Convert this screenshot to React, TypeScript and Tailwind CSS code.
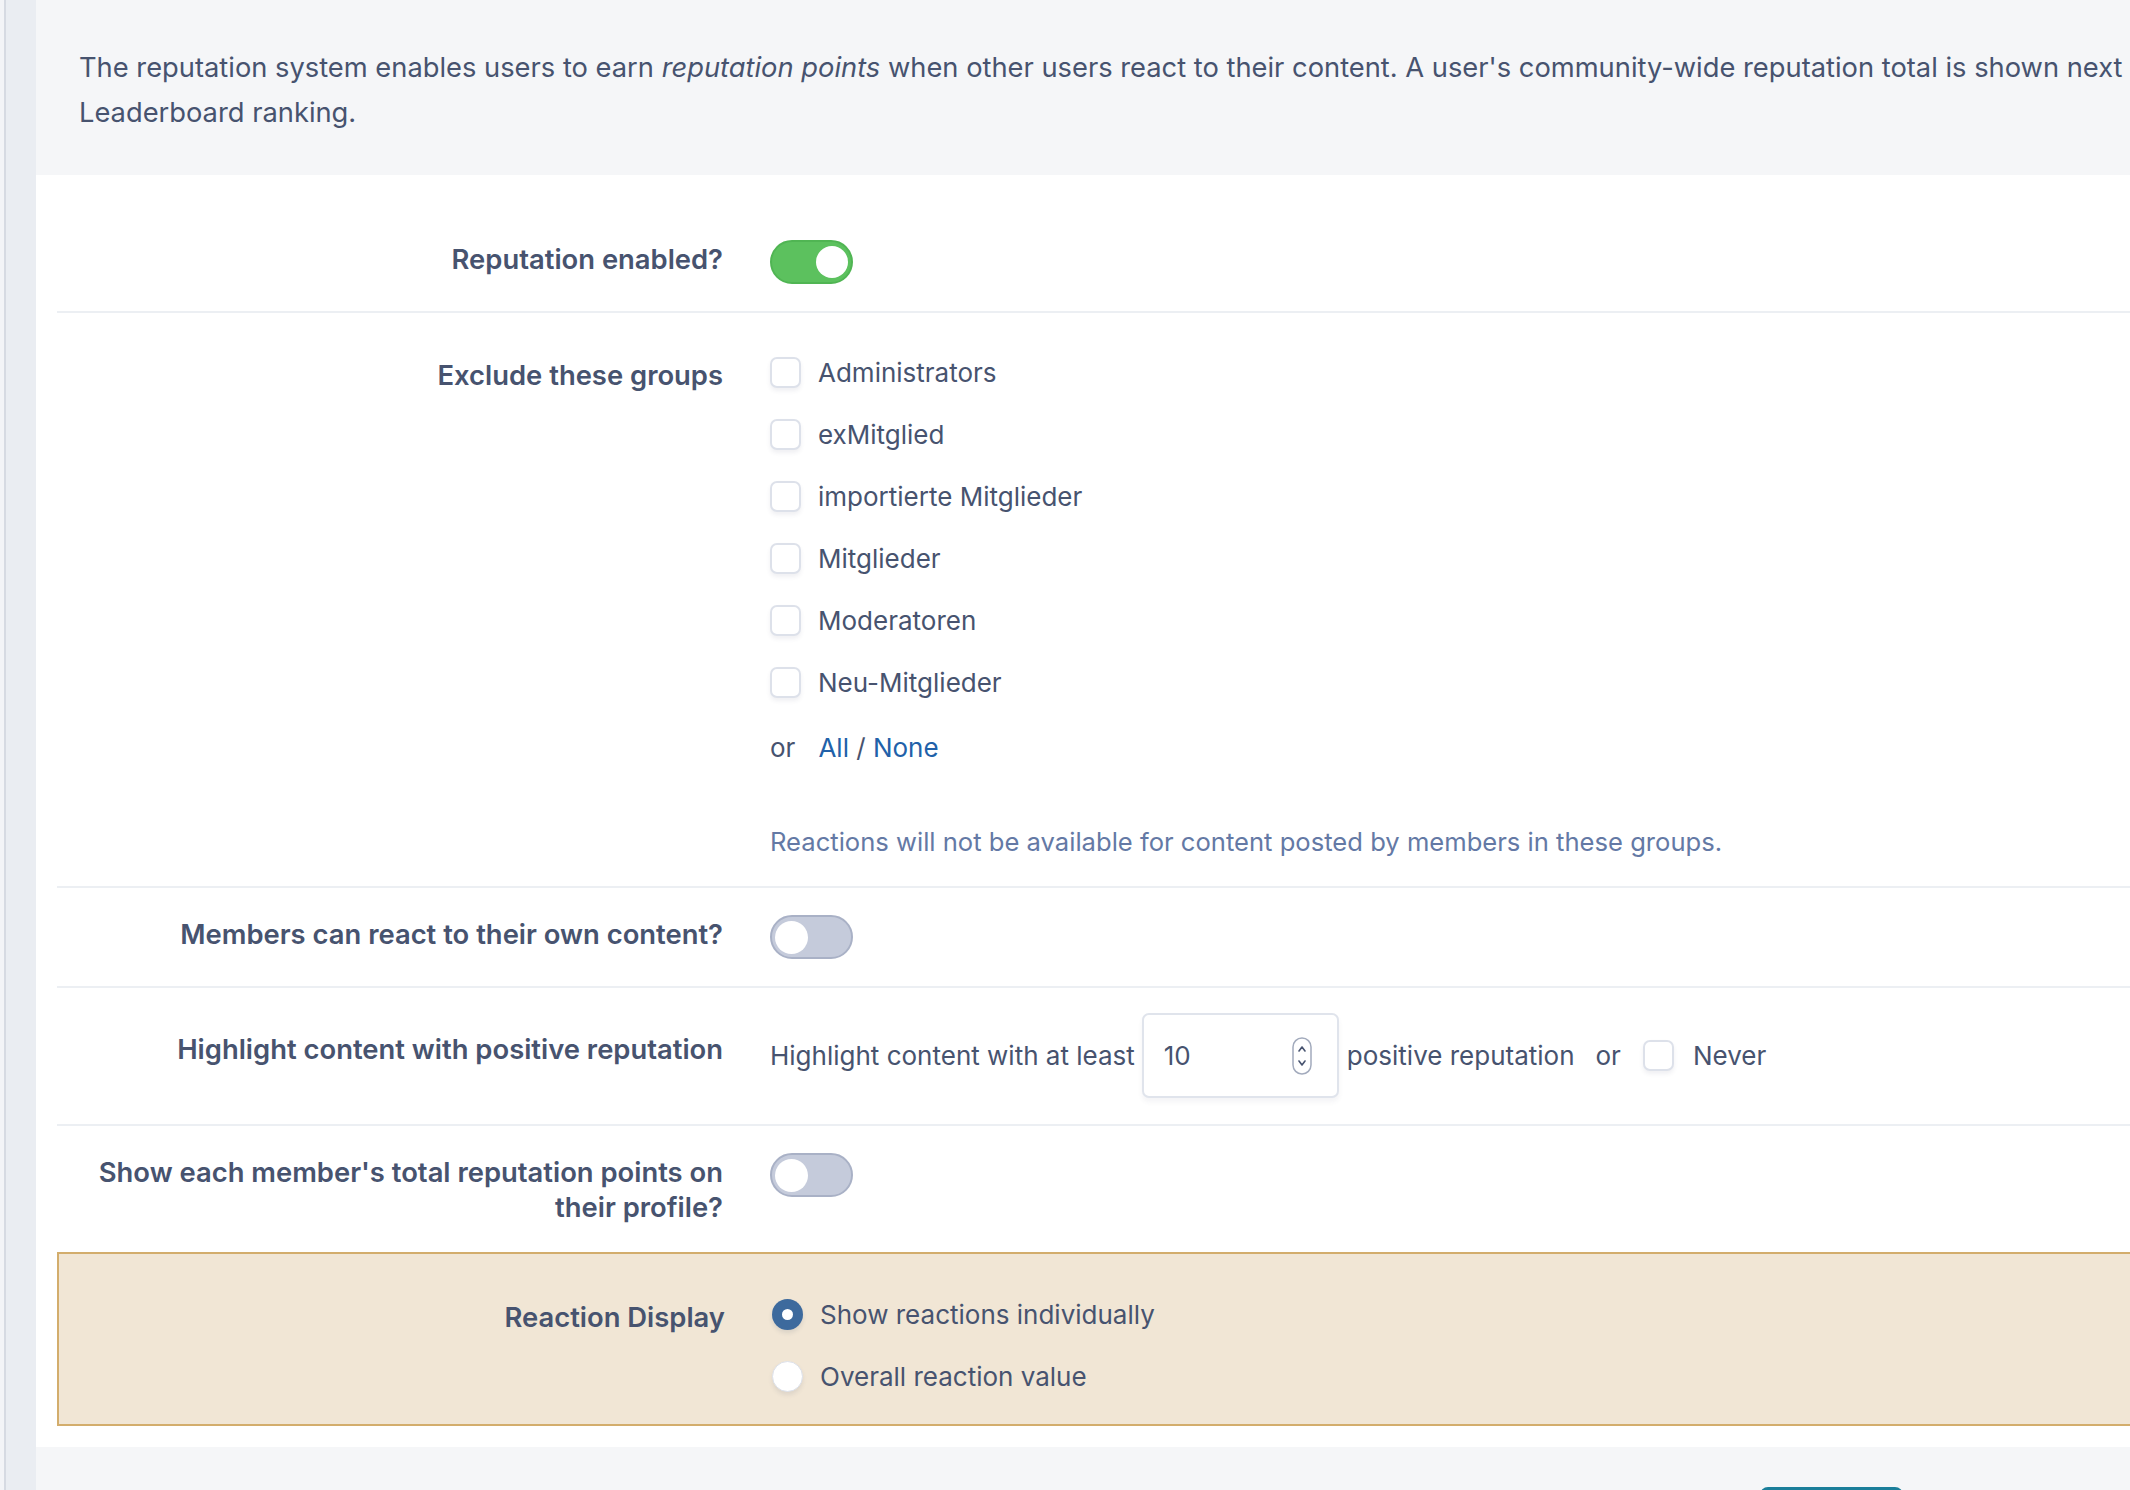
import React from "react";

function ToggleOn() {
  return (
    <div className="w-[83px] h-[44px] rounded-full bg-[#5cc15e] border-2 border-[#50b553] flex items-center justify-end pr-[3px]">
      <div className="w-[32px] h-[32px] rounded-full bg-white" />
    </div>
  );
}

function ToggleOff() {
  return (
    <div className="w-[83px] h-[44px] rounded-full bg-[#c5cbdb] border-2 border-[#a9b1c6] flex items-center pl-[3px]">
      <div className="w-[33px] h-[33px] rounded-full bg-white" />
    </div>
  );
}

function Checkbox() {
  return (
    <span className="block w-[31px] h-[31px] shrink-0 rounded-[7px] border-2 border-[#dde1ea] bg-white shadow-[0_3px_4px_rgba(60,70,100,0.08)]" />
  );
}

function Spinner() {
  return (
    <svg width="22" height="40" viewBox="0 0 22 40" fill="none">
      <rect x="2" y="2" width="18" height="36" rx="9" stroke="#a3abbd" strokeWidth="1.5" fill="white" />
      <path d="M8 15 L11 11 L14 15" stroke="#47536f" strokeWidth="1.6" strokeLinecap="round" strokeLinejoin="round" />
      <path d="M8 25 L11 29 L14 25" stroke="#47536f" strokeWidth="1.6" strokeLinecap="round" strokeLinejoin="round" />
    </svg>
  );
}

const groups = [
  "Administrators",
  "exMitglied",
  "importierte Mitglieder",
  "Mitglieder",
  "Moderatoren",
  "Neu-Mitglieder",
];

const labelCls =
  "w-[690px] shrink-0 pr-[24px] text-right font-semibold text-[27.4px] text-[#47536f] leading-[35px] whitespace-nowrap";

export default function App() {
  return (
    <div className="w-[2130px] h-[1490px] overflow-hidden bg-white font-['Inter','Noto_Sans',sans-serif] text-[26px] text-[#47536f] flex">
      {/* left strip */}
      <div className="w-[36px] shrink-0 flex bg-[#eaedf2]">
        <div className="w-[4px] bg-[#f3f4f7]" />
        <div className="w-[2px] bg-[#d6dae2]" />
      </div>

      {/* main */}
      <div className="w-[2300px] shrink-0 flex flex-col">
        {/* tab bar */}
        <div className="h-[6px] flex bg-[#d9dce6]">
          <div className="w-[7px] bg-[#cdd2dc]" />
          <div className="w-[355px] bg-white" />
        </div>

        {/* info */}
        <div className="bg-[#f5f6f8] pl-[43px] pt-[45px] pb-[40px] text-[27.3px] leading-[45px] whitespace-nowrap">
          The reputation system enables users to earn <em>reputation points</em> when other users react to their content. A user's community-wide reputation total is shown next
          <br />
          Leaderboard ranking.
        </div>

        {/* form */}
        <div className="pl-[21px] pt-[38px]">
          {/* row 1 */}
          <div className="flex py-[27px]">
            <div className={`${labelCls} pt-[2px]`}>Reputation enabled?</div>
            <div className="pl-[23px]">
              <ToggleOn />
            </div>
          </div>

          {/* row 2 */}
          <div className="flex py-[27px] border-t-2 border-[#eceff3]">
            <div className={`${labelCls} pt-[18px]`}>Exclude these groups</div>
            <div className="pl-[23px] pt-[15px] flex flex-col leading-[35px]">
              <div className="flex flex-col gap-[27px]">
                {groups.map((g) => (
                  <div key={g} className="flex items-center h-[35px] gap-[17px]">
                    <Checkbox />
                    <span>{g}</span>
                  </div>
                ))}
              </div>
              <div className="mt-[30px] flex items-center h-[35px] gap-[23px]">
                <span>or</span>
                <span>
                  <a className="text-[#2161a9]">All</a> / <a className="text-[#2161a9]">None</a>
                </span>
              </div>
              <div className="mt-[59px] text-[25.6px] text-[#6479a5]">
                Reactions will not be available for content posted by members in these groups.
              </div>
            </div>
          </div>

          {/* row 3 */}
          <div className="flex py-[27px] border-t-2 border-[#eceff3]">
            <div className={`${labelCls} pt-[2px]`}>Members can react to their own content?</div>
            <div className="pl-[23px]">
              <ToggleOff />
            </div>
          </div>

          {/* row 4 */}
          <div className="flex pt-[25px] pb-[26px] border-t-2 border-[#eceff3]">
            <div className={`${labelCls} pt-[19px]`}>Highlight content with positive reputation</div>
            <div className="pl-[23px] flex items-center h-[85px] whitespace-nowrap">
              <span>Highlight content with at least</span>
              <div className="ml-[7px] w-[197px] h-[85px] rounded-[7px] border-2 border-[#e0e4ec] bg-white shadow-[0_4px_5px_rgba(60,70,100,0.06)] flex items-center pl-[20px] pr-[24px] justify-between">
                <span>10</span>
                <Spinner />
              </div>
              <span className="ml-[8px]">positive reputation</span>
              <span className="ml-[21px]">or</span>
              <span className="ml-[22px]">
                <Checkbox />
              </span>
              <span className="ml-[19px]">Never</span>
            </div>
          </div>

          {/* row 5 */}
          <div className="flex pt-[27px] pb-[27px] border-t-2 border-[#eceff3]">
            <div className={`${labelCls} pt-[2px]`}>
              Show each member's total reputation points on
              <br />
              their profile?
            </div>
            <div className="pl-[23px]">
              <ToggleOff />
            </div>
          </div>

          {/* reaction display */}
          <div className="flex pt-[27px] pb-[30px] border-2 border-[#d3ad6c] bg-[#f1e6d5]">
            <div className={`${labelCls} pt-[19px]`}>Reaction Display</div>
            <div className="pl-[23px] pt-[16px] flex flex-col gap-[27px] leading-[35px]">
              <div className="flex items-center h-[35px] gap-[17px]">
                <span className="w-[31px] h-[31px] rounded-full bg-[#3d6a9d] flex items-center justify-center shadow-[0_3px_4px_rgba(60,70,100,0.12)]">
                  <span className="w-[11px] h-[11px] rounded-full bg-white" />
                </span>
                <span>Show reactions individually</span>
              </div>
              <div className="flex items-center h-[35px] gap-[17px]">
                <span className="w-[31px] h-[31px] rounded-full bg-white border border-[#dde1ea] shadow-[0_3px_4px_rgba(60,70,100,0.1)]" />
                <span>Overall reaction value</span>
              </div>
            </div>
          </div>
        </div>

        {/* footer */}
        <div className="mt-[21px] flex-1 bg-[#f5f6f8] pt-[40px] pl-[1724px]">
          <div className="w-[143px] h-[60px] rounded-[8px] bg-[#1a7e9a]" />
        </div>
      </div>
    </div>
  );
}
